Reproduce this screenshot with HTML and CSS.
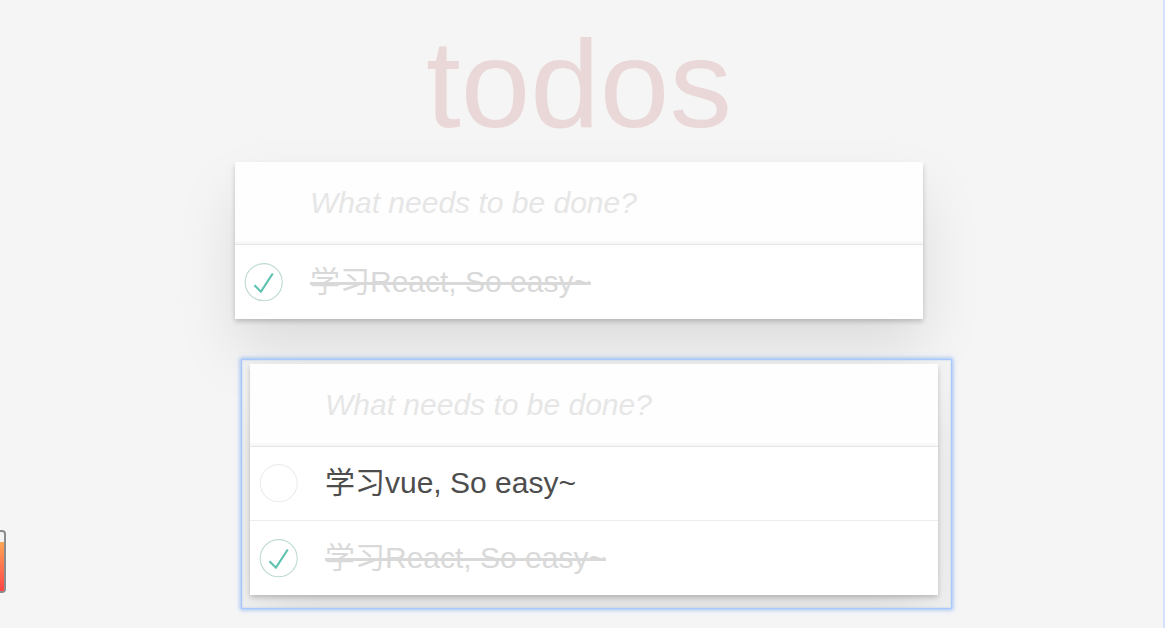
FILE: index.html
```html
<!DOCTYPE html>
<html lang="zh-CN">
<head>
<meta charset="utf-8">
<title>todos</title>
<link rel="stylesheet" href="styles.css">
</head>
<body>
<div class="page">
  <h1 class="title">todos</h1>

  <section class="todoapp">
    <header class="todo-header">
      <input class="new-todo" placeholder="What needs to be done?">
    </header>
    <ul class="todo-list">
      <li class="todo completed">
        <svg class="toggle" width="50" height="50" viewBox="-10 -18 100 135"><circle cx="50" cy="50" r="50" fill="none" stroke="#bddad5" stroke-width="3"/><path fill="#5dc2af" d="M72 25L42 71 27 56l-4 4 20 20 34-52z"/></svg>
        <label class="todo-label">学习React, So easy~</label>
      </li>
    </ul>
  </section>

  <div class="frame">
    <section class="todoapp todoapp--inner">
      <header class="todo-header">
        <input class="new-todo" placeholder="What needs to be done?">
      </header>
      <ul class="todo-list">
        <li class="todo">
          <svg class="toggle" width="50" height="50" viewBox="-10 -18 100 135"><circle cx="50" cy="50" r="50" fill="none" stroke="#ededed" stroke-width="3"/></svg>
          <label class="todo-label">学习vue, So easy~</label>
        </li>
        <li class="todo completed">
          <svg class="toggle" width="50" height="50" viewBox="-10 -18 100 135"><circle cx="50" cy="50" r="50" fill="none" stroke="#bddad5" stroke-width="3"/><path fill="#5dc2af" d="M72 25L42 71 27 56l-4 4 20 20 34-52z"/></svg>
          <label class="todo-label">学习React, So easy~</label>
        </li>
      </ul>
    </section>
  </div>
</div>

<div class="side-meter"><div class="side-meter__fill"></div></div>
<div class="edge-line"></div>
</body>
</html>
```

FILE: styles.css
```css
html, body {
  margin: 0;
  padding: 0;
}

body {
  background: #f5f5f5;
  font-family: "Liberation Sans", Arial, "Noto Sans CJK SC", sans-serif;
  color: #4d4d4d;
  overflow: hidden;
  height: 628px;
}

.page {
  padding: 21px 7px 0 0;
}

.title {
  margin: 0;
  text-align: center;
  font-size: 125px;
  line-height: 125px;
  height: 125px;
  font-weight: 100;
  color: rgba(175, 47, 47, 0.15);
}

.todoapp {
  width: 688px;
  margin: 16px auto 0;
  background: #fff;
  box-shadow: 0 2.5px 5px 0 rgba(0, 0, 0, 0.2), 0 31px 62px 0 rgba(0, 0, 0, 0.1);
}

.todoapp--inner {
  margin: 0;
}

.todo-header {
  display: block;
}

.new-todo {
  display: block;
  width: 100%;
  box-sizing: border-box;
  height: 82px;
  margin: 0;
  border: none;
  outline: none;
  padding: 20px 20px 20px 75px;
  font-family: "Liberation Sans", Arial, sans-serif;
  font-size: 30px;
  line-height: 42px;
  font-style: italic;
  color: #4d4d4d;
  background: rgba(0, 0, 0, 0.003);
  box-shadow: inset 0 -2.5px 1.25px rgba(0, 0, 0, 0.03);
}

.new-todo::placeholder {
  color: #e6e6e6;
  font-style: italic;
}

.todo-list {
  margin: 0;
  padding: 0;
  list-style: none;
  border-top: 1.25px solid #e6e6e6;
}

.todo {
  display: flex;
  align-items: center;
  font-size: 30px;
  border-bottom: 1.25px solid #ededed;
}

.todo:last-child {
  border-bottom: none;
}

.toggle {
  flex: none;
  display: block;
}

.todo-label {
  display: block;
  padding: 18.75px 18.75px 18.75px 25px;
  line-height: 36px;
  color: #4d4d4d;
  white-space: nowrap;
}

.completed .todo-label {
  color: #d9d9d9;
  text-decoration: line-through;
  text-decoration-thickness: 2.5px;
}

.frame {
  width: 688px;
  margin: 40px 0 0 241px;
  padding: 4px 13px 13px 8px;
  border: 1px solid #a7c9fb;
  box-shadow: 0 0 4px 1px rgba(100, 155, 250, 0.6), inset 0 0 2px rgba(100, 155, 250, 0.4);
  overflow: hidden;
}

.side-meter {
  position: absolute;
  left: -14px;
  top: 530px;
  width: 16px;
  height: 59px;
  border: 2px solid #8c8c8c;
  border-radius: 4px;
  background: #f3f3f3;
  display: flex;
  flex-direction: column;
  justify-content: flex-end;
}

.side-meter__fill {
  height: 49px;
  background: linear-gradient(#ffa656, #ff4545);
}

.edge-line {
  position: fixed;
  top: 0;
  right: 0;
  width: 2px;
  height: 100%;
  background: #d6e1fb;
}
```
